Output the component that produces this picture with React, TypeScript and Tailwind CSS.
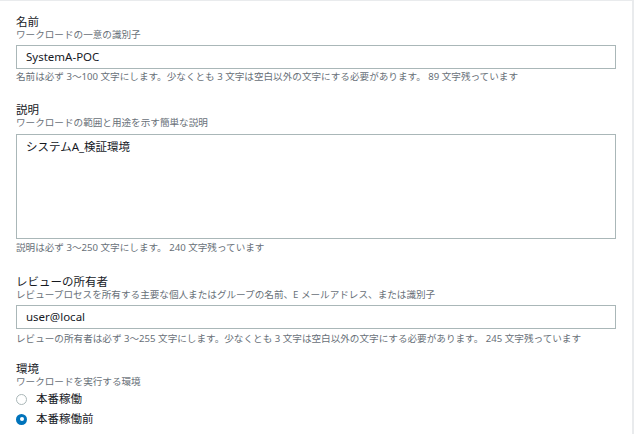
const font = { fontFamily: '"Noto Sans", "Noto Sans CJK JP", sans-serif' };

type FieldProps = {
  label: string;
  description: string;
  children: React.ReactNode;
  constraint?: string;
  constraintClass?: string;
  className?: string;
};

const Field = ({ label, description, children, constraint, constraintClass = 'mt-[1px]', className }: FieldProps) => (
  <div className={className}>
    <div className="text-[11.5px] leading-[14px] text-[#16191f]">{label}</div>
    <div className="text-[9.6px] leading-[12px] text-[#687078]">{description}</div>
    {children}
    {constraint && (
      <div className={`${constraintClass} text-[9.6px] leading-[12px] text-[#687078]`}>{constraint}</div>
    )}
  </div>
);

const Radio = ({ label, checked }: { label: string; checked?: boolean }) => (
  <label className="flex h-5 items-center gap-[9px]">
    {checked ? (
      <span className="flex h-[11px] w-[11px] items-center justify-center rounded-full bg-[#0073bb]">
        <span className="h-[4px] w-[4px] rounded-full bg-white" />
      </span>
    ) : (
      <span className="h-[11px] w-[11px] rounded-full border border-[#aab7b8] bg-white" />
    )}
    <span className="text-[11.5px] text-[#16191f]">{label}</span>
  </label>
);

export default function App() {
  return (
    <div style={font} className="h-[434px] w-[634px] overflow-hidden bg-white">
      <div className="h-full w-[634px] border-t border-r-2 border-[#e9ebed] px-4 pt-[14px]">
        <Field
          label="名前"
          description="ワークロードの一意の識別子"
          constraint="名前は必ず 3〜100 文字にします。少なくとも 3 文字は空白以外の文字にする必要があります。 89 文字残っています"
          constraintClass="mt-[2px]"
        >
          <div className="mt-1 flex h-6 w-[600px] items-center border border-[#aab7b8] px-[9px] text-[11.5px] text-[#16191f]">
            SystemA-POC
          </div>
        </Field>

        <Field
          className="mt-[20px]"
          label="説明"
          description="ワークロードの範囲と用途を示す簡単な説明"
          constraint="説明は必ず 3〜250 文字にします。 240 文字残っています"
          constraintClass="mt-[3px]"
        >
          <div className="mt-[5px] h-[105px] w-[600px] border border-[#aab7b8] px-[9px] pt-[3px] text-[11.5px] text-[#16191f]">
            システムA_検証環境
          </div>
        </Field>

        <Field
          className="mt-[21px]"
          label="レビューの所有者"
          description="レビュープロセスを所有する主要な個人またはグループの名前、E メールアドレス、または識別子"
          constraint="レビューの所有者は必ず 3〜255 文字にします。少なくとも 3 文字は空白以外の文字にする必要があります。 245 文字残っています"
          constraintClass="mt-[4px]"
        >
          <div className="mt-1 flex h-6 w-[600px] items-center border border-[#aab7b8] px-[9px] text-[11.5px] text-[#16191f]">
            user@local
          </div>
        </Field>

        <Field className="mt-[17px]" label="環境" description="ワークロードを実行する環境">
          <div className="mt-[1px]">
            <Radio label="本番稼働" />
            <Radio label="本番稼働前" checked />
          </div>
        </Field>
      </div>
    </div>
  );
}
